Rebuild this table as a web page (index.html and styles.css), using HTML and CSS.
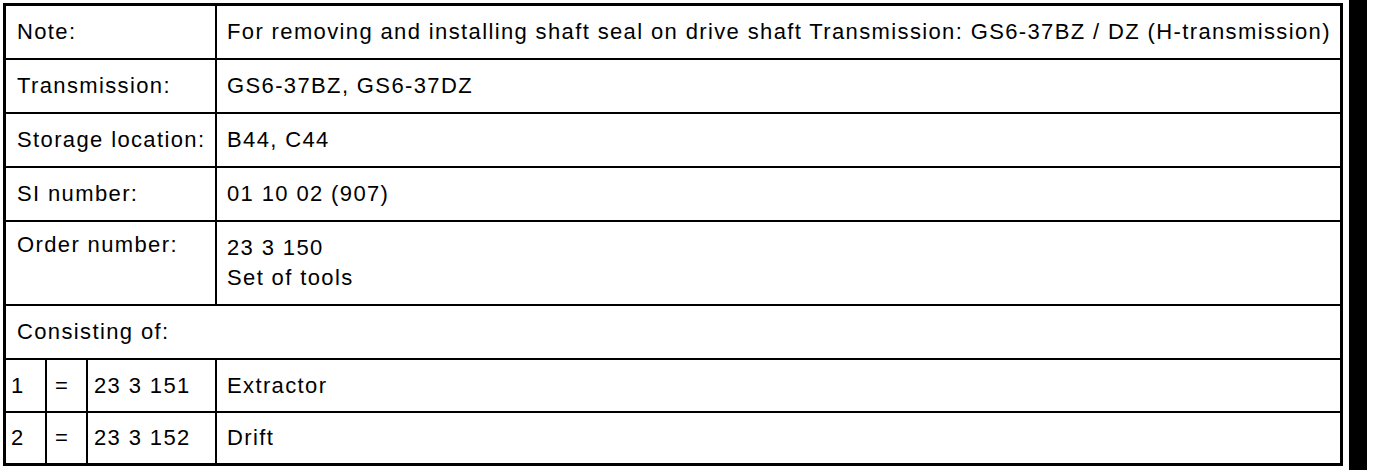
FILE: index.html
```html
<!DOCTYPE html>
<html>
<head>
<meta charset="utf-8">
<link rel="stylesheet" href="styles.css">
</head>
<body>
<div class="page">
  <div class="sheet">
    <div class="cell label r1">Note:</div>
    <div class="cell value r1">For removing and installing shaft seal on drive shaft Transmission: GS6-37BZ / DZ (H-transmission)</div>
    <div class="cell label r2">Transmission:</div>
    <div class="cell value r2">GS6-37BZ, GS6-37DZ</div>
    <div class="cell label r3">Storage location:</div>
    <div class="cell value r3">B44, C44</div>
    <div class="cell label r4">SI number:</div>
    <div class="cell value r4">01 10 02 (907)</div>
    <div class="cell label top r5">Order number:</div>
    <div class="cell value top r5">23 3 150<br>Set of tools</div>
    <div class="cell full r6">Consisting of:</div>
    <div class="cell num">1</div>
    <div class="cell eq">=</div>
    <div class="cell part">23 3 151</div>
    <div class="cell value">Extractor</div>
    <div class="cell num">2</div>
    <div class="cell eq">=</div>
    <div class="cell part">23 3 152</div>
    <div class="cell value">Drift</div>
  </div>
  <div class="bar"></div>
</div>
</body>
</html>
```

FILE: styles.css
```css
html, body {
  margin: 0;
  padding: 0;
  background: #fff;
}

.page {
  display: flex;
  align-items: flex-start;
  padding: 3px 0 0 3px;
  gap: 6px;
  height: 467px;
}

.sheet {
  display: grid;
  grid-template-columns: 39px 39px 127px 1123px;
  grid-template-rows: 52px 52px 52px 52px 82px 52px 51px 50px;
  gap: 2px;
  padding: 3px;
  background: #000;
  font-family: "Liberation Sans", Arial, sans-serif;
  font-size: 22px;
  letter-spacing: 1.37px;
  color: #000;
}

.cell {
  background: #fff;
  display: flex;
  align-items: center;
  white-space: nowrap;
}

.label {
  grid-column: 1 / 4;
  padding-left: 11px;
}

.value {
  padding-left: 10px;
}

.full {
  grid-column: 1 / 5;
  padding-left: 11px;
}

.top {
  align-items: flex-start;
  padding-top: 8px;
  line-height: 30px;
}

.value.top {
  display: block;
  padding-top: 11px;
}

.num {
  padding-left: 5px;
}

.eq {
  padding-left: 8px;
}

.part {
  padding-left: 6px;
}

.bar {
  width: 18px;
  height: 470px;
  margin-top: -3px;
  background: #000;
}
```
